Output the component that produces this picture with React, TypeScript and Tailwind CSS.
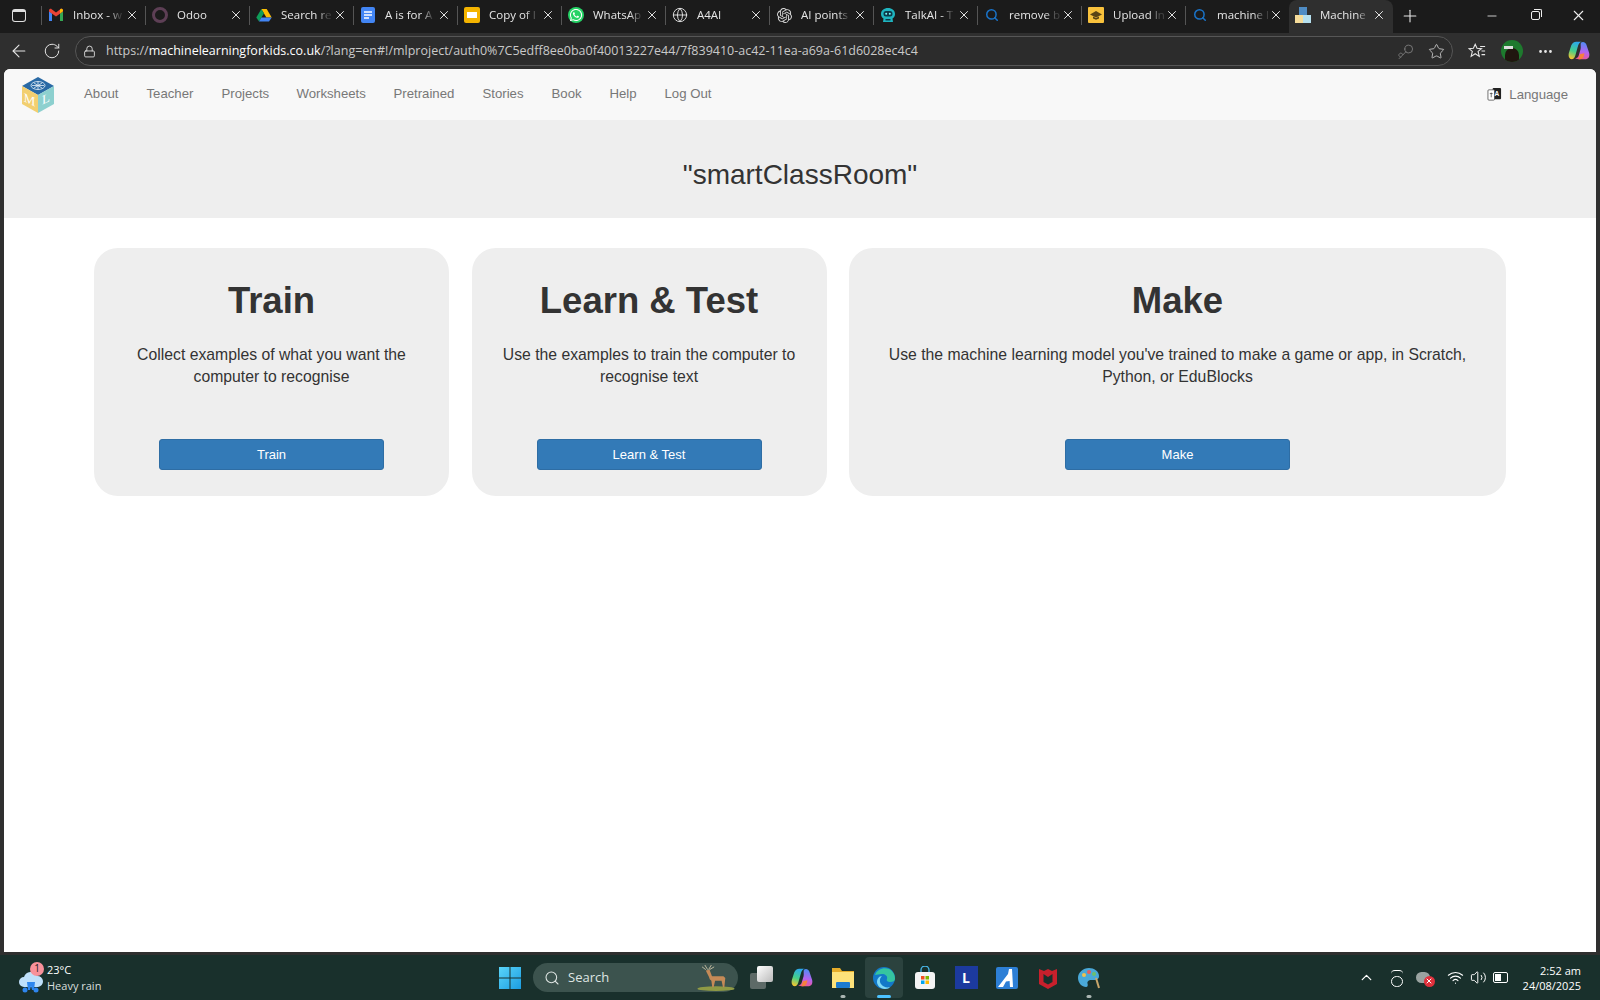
import type { ReactNode } from 'react';
import { ArrowLeft, ChevronUp, Globe, Key, Lock, Minus, MoreHorizontal, Plus, RotateCw, Search, Star, Volume2, Wifi, X } from 'lucide-react';
import { FaWhatsapp } from 'react-icons/fa';
import { SiOpenai } from 'react-icons/si';

const UI_FONT = "font-['Open_Sans','Noto_Sans',sans-serif]";

/* ---------- favicons ---------- */

function GmailIcon() {
  return (
    <svg viewBox="0 0 16 14" className="h-[14px] w-4">
      <path d="M1 13V3l3 2.4V13z" fill="#4285f4" />
      <path d="M12 13V5.4L15 3v10z" fill="#34a853" />
      <path d="M1 3.4 8 8.6l7-5.2V2.6C15 1 13.4.4 12.3 1.2L8 4.4 3.7 1.2C2.6.4 1 1 1 2.6z" fill="#ea4335" />
      <path d="M12 5.4 15 3v-.4C15 1 13.4.4 12.3 1.2L12 1.4z" fill="#fbbc04" />
    </svg>
  );
}

function DriveIcon() {
  return (
    <svg viewBox="0 0 16 14" className="h-[14px] w-4">
      <path d="M5.3 1h5.4l5 8.4h-5.3z" fill="#fbbc04" />
      <path d="M5.3 1 .3 9.4 3 13.6l5-8.4z" fill="#0f9d58" />
      <path d="M5.4 9.4h10.3L13 13.6H3z" fill="#4285f4" />
    </svg>
  );
}

function DocsIcon() {
  return (
    <svg viewBox="0 0 16 16" className="h-4 w-4">
      <rect x="1" y="0" width="14" height="16" rx="2" fill="#4285f4" />
      <path d="M4 5h8M4 8h8M4 11h5" stroke="#fff" strokeWidth="1.4" />
    </svg>
  );
}

function SlidesIcon() {
  return (
    <svg viewBox="0 0 16 16" className="h-4 w-4">
      <rect x="0" y="0" width="16" height="16" rx="2" fill="#f4b400" />
      <rect x="3" y="5" width="10" height="6" fill="#fff" />
    </svg>
  );
}

function WhatsAppIcon() {
  return (
    <span className="flex h-4 w-4 items-center justify-center rounded-full bg-[#25d366] text-white">
      <FaWhatsapp size={14} />
    </span>
  );
}

function TalkIcon() {
  return (
    <svg viewBox="0 0 16 16" className="h-4 w-4">
      <path d="M8 1c4 0 7 2.500 7 6 0 2-1 3.500-2.500 4.500l.5 3.500H3l.5-3.500C2 10.500 1 9 1 7c0-3.500 3-6 7-6z" fill="#1fb5c0" />
      <rect x="3.500" y="4" width="9" height="5.500" rx="2.500" fill="#0d3a4a" />
      <circle cx="6.200" cy="6.800" r="1" fill="#7ff" />
      <circle cx="9.800" cy="6.800" r="1" fill="#7ff" />
      <path d="M5.500 12h5v1.500h-5z" fill="#0d3a4a" />
    </svg>
  );
}

function UploadIcon() {
  return (
    <svg viewBox="0 0 16 16" className="h-4 w-4">
      <rect width="16" height="16" rx="1" fill="#f9c23c" />
      <path d="M8 4 14 7.500 8 10.500 2 7.500z" fill="#5b4415" />
      <path d="M5 9.500v2l3 1.200 3-1.200v-2l-3 1.500z" fill="#5b4415" />
    </svg>
  );
}

/* three toy blocks, the small favicon of the site */
function BlocksIcon() {
  return (
    <svg viewBox="0 0 16 16" className="h-4 w-4">
      <rect x="4" y="0" width="8" height="8" fill="#4f8cc4" />
      <rect x="0" y="8" width="8" height="8" fill="#f6dc9a" />
      <rect x="8" y="8" width="8" height="8" fill="#b6e0ef" />
    </svg>
  );
}

function MlLogo() {
  return (
    <svg viewBox="0 0 32 36" className="h-9 w-8 shrink-0">
      <path d="M16 0 32 9 16 18 0 9z" fill="#2a6aa5" />
      <path d="M0 9 16 18V36L0 27z" fill="#f2cf70" />
      <path d="M32 9 16 18V36L32 27z" fill="#8dd0cf" />
      <g fill="none" stroke="#e6f0f8" strokeWidth="0.8">
        <ellipse cx="16" cy="8.500" rx="7" ry="4" />
        <path d="M16 4.500v8M10 8.500h12M12 6l8 5M20 6l-8 5" />
      </g>
      <text x="7.500" y="27" textAnchor="middle" fontFamily="'Liberation Serif', serif" fontSize="13" fill="#fff" transform="skewY(25) translate(0 -3.500)">M</text>
      <text x="24" y="26" textAnchor="middle" fontFamily="'Liberation Serif', serif" fontSize="13" fill="#fff" transform="skewY(-25) translate(0 11)">L</text>
    </svg>
  );
}

function CopilotIcon({ id, className }: { id: string; className: string }) {
  return (
    <svg viewBox="0 0 24 24" className={className}>
      <defs>
        <linearGradient id={`${id}L`} x1="0.6" y1="0" x2="0.3" y2="1">
          <stop offset="0" stopColor="#2aa7f0" />
          <stop offset="0.55" stopColor="#45d08a" />
          <stop offset="1" stopColor="#f7c62f" />
        </linearGradient>
        <linearGradient id={`${id}R`} x1="0.6" y1="0" x2="0.4" y2="1">
          <stop offset="0" stopColor="#4d8df5" />
          <stop offset="0.55" stopColor="#b463ee" />
          <stop offset="1" stopColor="#f0568f" />
        </linearGradient>
      </defs>
      <path d="M9 2h6c-2.500.5-3.500 2.500-4.500 6l-2.500 9c-.7 2.500-2 4-4 4-2.500 0-4-3-3-7l2.500-8C4.500 3.500 6.500 2 9 2z" fill={`url(#${id}L)`} />
      <path d="M14 3c2.500-1.500 5-.5 6 2l3 9c1 3.500-.5 7-3.500 7H12c-2.500 0-4-1-4-1 2 0 3-1 3.700-3l2-7c.5-2-.2-4.500.3-7z" fill={`url(#${id}R)`} />
      <path d="M13 21c2 0 3.500-1 4.200-3.500l.8-3-5 1-1.500 5.500z" fill="#f7803c" />
    </svg>
  );
}

/* ---------- browser chrome ---------- */

const searchIcon = <Search size={14} strokeWidth={2.6} className="text-[#1a73c8]" />;

const tabs: { title: string; icon: ReactNode; active?: boolean }[] = [
  { title: 'Inbox - w', icon: <GmailIcon /> },
  { title: 'Odoo', icon: <span className="h-4 w-4 rounded-full border-[3px] border-[#5d3f55]" /> },
  { title: 'Search re', icon: <DriveIcon /> },
  { title: 'A is for A', icon: <DocsIcon /> },
  { title: 'Copy of I', icon: <SlidesIcon /> },
  { title: 'WhatsAp', icon: <WhatsAppIcon /> },
  { title: 'A4AI', icon: <Globe size={16} strokeWidth={1.4} className="text-[#e4e4e4]" /> },
  { title: 'AI points', icon: <SiOpenai size={15} className="text-[#d8d8d8]" /> },
  { title: 'TalkAI - T', icon: <TalkIcon /> },
  { title: 'remove b', icon: searchIcon },
  { title: 'Upload In', icon: <UploadIcon /> },
  { title: 'machine l', icon: searchIcon },
  { title: 'Machine', icon: <BlocksIcon />, active: true },
];

function TabBar() {
  return (
    <div className={`flex h-[33px] shrink-0 items-center bg-[#1b1b1b] text-[11.500px] text-[#e6e6e6] ${UI_FONT}`}>
      <div className="mb-[2px] flex w-[41px] shrink-0 justify-center pr-1">
        <div className="h-[13px] w-[14px] rounded-[3px] border border-[#e0e0e0] border-t-[3px]" />
      </div>
      {tabs.map((tab) => (
        <div
          key={tab.title}
          className={
            tab.active
              ? 'flex h-full w-[104px] shrink-0 items-center rounded-t-lg bg-[#2f2f2f] pb-[3px] pl-[6px]'
              : 'mb-[3px] flex h-[19px] w-[104px] shrink-0 items-center border-l border-[#555] pl-[6px]'
          }
        >
          <span className="flex w-4 shrink-0 items-center justify-center">{tab.icon}</span>
          <span className="ml-[9px] w-[52px] shrink-0 whitespace-nowrap [mask-image:linear-gradient(to_right,black_70%,rgba(0,0,0,0.2)_90%)]">
            {tab.title}
          </span>
          <X size={14} strokeWidth={1.6} className="shrink-0 text-[#f0f0f0]" />
        </div>
      ))}
      <Plus size={20} strokeWidth={1.3} className="mb-[2px] ml-[7px] text-[#e8e8e8]" />
      <div className="mb-[2px] ml-auto flex items-center text-[#eee]">
        <span className="flex w-[44px] justify-center"><Minus size={14} strokeWidth={1.4} /></span>
        <span className="flex w-[42px] justify-center">
          <span className="relative h-[9px] w-[9px] rounded-[2px] border border-[#eee] bg-[#1b1b1b] after:absolute after:-right-[3px] after:-top-[3px] after:h-[8px] after:w-[8px] after:rounded-tr-[2px] after:border-r after:border-t after:border-[#eee]" />
        </span>
        <span className="flex w-[44px] justify-center"><X size={17} strokeWidth={1.5} /></span>
      </div>
    </div>
  );
}

function AddressBar() {
  return (
    <div className={`flex h-[36px] shrink-0 items-center bg-[#2f2f2f] text-[#e6e6e6] ${UI_FONT}`}>
      <div className="flex w-[75px] shrink-0 items-center pl-[9px]">
        <ArrowLeft size={20} strokeWidth={1.3} />
        <RotateCw size={18} strokeWidth={1.3} className="ml-[14px]" />
      </div>
      <div className="flex h-[30px] w-[1378px] shrink-0 items-center rounded-full border border-[#565656] bg-[#2c2c2c] pl-[7px] pr-[7px]">
        <Lock size={13} strokeWidth={1.6} />
        <span className="ml-[10px] whitespace-nowrap text-[12.500px] text-[#c9c9c9]">
          https://<span className="text-white">machinelearningforkids.co.uk</span>/?lang=en#!/mlproject/auth0%7C5edff8ee0ba0f40013227e44/7f839410-ac42-11ea-a69a-61d6028ec4c4
        </span>
        <Key size={17} strokeWidth={1.1} className="ml-auto rotate-180 text-[#8a8a8a]" />
        <Star size={17} strokeWidth={1.2} className="ml-[14px] text-[#cfcfcf]" />
      </div>
      <svg viewBox="0 0 20 20" fill="none" stroke="#e6e6e6" strokeWidth="1.200" className="ml-[15px] h-[18px] w-[18px]">
        <path d="M8 2.500 10 7l5 .4-3.800 3.100L12.500 16 8 13l-4.500 3 1.300-5.500L1 7.400 6 7z" />
        <path d="M13.500 5H19M15 10h4M15 14h4" />
      </svg>
      <span className="relative ml-[15px] flex h-[22px] w-[22px] items-center justify-center overflow-hidden rounded-full bg-[#1e7a2e]">
        <span className="mt-[8px] h-[14px] w-[14px] rounded-t-full bg-[#20160f]" />
        <span className="absolute left-[3px] top-[6px] h-[3px] w-[9px] bg-[#ddd]" />
      </span>
      <MoreHorizontal size={17} className="ml-[14px]" />
      <CopilotIcon id="cpTop" className="ml-[14px] h-[22px] w-[22px]" />
    </div>
  );
}

/* ---------- page ---------- */

const navLinks = [
  ['About', 'w-[62.500px]'],
  ['Teacher', 'w-[75px]'],
  ['Projects', 'w-[75px]'],
  ['Worksheets', 'w-[97px]'],
  ['Pretrained', 'w-[89px]'],
  ['Stories', 'w-[69px]'],
  ['Book', 'w-[58px]'],
  ['Help', 'w-[55px]'],
  ['Log Out', 'w-[60px]'],
];

function Navbar() {
  return (
    <div className="flex h-[51px] shrink-0 items-center rounded-t-[6px] bg-[#f8f8f8] pl-[18px] pr-[28px] text-[13.200px] text-[#777]">
      <MlLogo />
      <nav className="ml-[30px] flex items-center pb-[1px]">
        {navLinks.map(([label, width]) => (
          <a key={label} className={`${width} shrink-0 whitespace-nowrap`}>{label}</a>
        ))}
      </nav>
      <div className="ml-auto flex items-center pt-[1px]">
        <svg viewBox="0 0 16 16" className="h-[15px] w-[15px]">
          <rect x="6" y="1" width="9" height="12" rx="1" fill="#222" />
          <rect x="1" y="3" width="7" height="11" rx="1" fill="#fff" stroke="#444" strokeWidth="0.800" />
          <path d="M3 7h3M4.500 6v5" stroke="#444" strokeWidth="0.800" />
          <text x="10.500" y="10" textAnchor="middle" fontSize="7" fontWeight="700" fill="#fff" fontFamily="'Liberation Sans', sans-serif">A</text>
        </svg>
        <span className="ml-[7px]">Language</span>
      </div>
    </div>
  );
}

function Card({ title, text, button, className }: { title: string; text: ReactNode; button: string; className: string }) {
  return (
    <div className={`flex h-[248px] shrink-0 flex-col items-center rounded-[24px] bg-[#eee] text-center text-[#333] ${className}`}>
      <h1 className="mt-[28px] text-[36.500px] font-bold leading-[50px]">{title}</h1>
      <p className="mt-[18px] text-[15.750px] leading-[22px] text-[#333]">{text}</p>
      <button className="mt-auto mb-[26px] h-[31px] w-[225px] rounded-[3px] border border-[#2e6da4] bg-[#337ab7] text-[13px] text-white">
        {button}
      </button>
    </div>
  );
}

function Page() {
  return (
    <div className="flex min-h-0 flex-1 flex-col rounded-t-[6px] bg-white font-['Liberation_Sans',Arial,sans-serif]">
      <Navbar />
      <div className="flex h-[98px] shrink-0 items-center justify-center bg-[#eee] pt-[11px] text-[28px] text-[#333]">
        "smartClassRoom"
      </div>
      <div className="mt-[30px] flex gap-[22.500px] pl-[90px]">
        <Card title="Train" text={<>Collect examples of what you want the<br />computer to recognise</>} button="Train" className="w-[355px]" />
        <Card title="Learn &amp; Test" text={<>Use the examples to train the computer to<br />recognise text</>} button="Learn &amp; Test" className="w-[355px]" />
        <Card title="Make" text={<>Use the machine learning model you've trained to make a game or app, in Scratch,<br />Python, or EduBlocks</>} button="Make" className="w-[657px]" />
      </div>
    </div>
  );
}

/* ---------- taskbar ---------- */

function StartIcon() {
  return (
    <svg viewBox="0 0 24 24" className="h-6 w-6">
      <defs>
        <linearGradient id="win" x1="0" y1="0" x2="1" y2="1"><stop offset="0" stopColor="#5ad4f8" /><stop offset="1" stopColor="#1b9de2" /></linearGradient>
      </defs>
      <path d="M1 1h10.500v10.500H1zM12.500 1H23v10.500H12.500zM1 12.500h10.500V23H1zM12.500 12.500H23V23H12.500z" fill="url(#win)" />
    </svg>
  );
}

function Deer() {
  return (
    <svg viewBox="0 0 40 28" className="absolute right-[3px] top-[2px] h-[26px] w-[38px]">
      <ellipse cx="20" cy="25.500" rx="20" ry="2.500" fill="#8f9a45" />
      <path d="M13 12h15l2 2-1 10h-1.500l-1.500-7h-7l-1.500 7H16l-1-7-2-2z" fill="#c58a57" />
      <path d="M9 6l4-1 3 8-3 1z" fill="#c58a57" />
      <path d="M8 0l3 5M15 0l-3 5M5 2l4 3M18 2l-5 3" stroke="#e8d8b8" strokeWidth="0.800" />
    </svg>
  );
}

const Slot = ({ children, active, dot }: { children: ReactNode; active?: boolean; dot?: string }) => (
  <div className={`relative flex h-[41px] w-[38px] shrink-0 items-center justify-center rounded-[4px] ${active ? 'bg-[#2b423e]' : ''}`}>
    {children}
    {dot && <span className={`absolute bottom-0 left-1/2 h-[3px] -translate-x-1/2 rounded-full ${dot}`} />}
  </div>
);

function Taskbar() {
  return (
    <div className={`flex h-[45px] shrink-0 items-center bg-[#19302c] text-white ${UI_FONT}`}>
      <div className="flex min-w-0 flex-1 items-center pl-[18px]">
        <div className="relative h-[26px] w-[26px]">
          <svg viewBox="0 0 26 26" className="mt-[3px] h-[26px] w-[26px]">
            <path d="M6 19a5 5 0 0 1 0-10 7 7 0 0 1 13-1 5.500 5.500 0 0 1 1 11z" fill="#bfe0fb" />
            <path d="M9 14h8l-1 8h-2l-1-4-1 4H10z" fill="#2e86ee" />
            <circle cx="7" cy="22" r="2.500" fill="#2e86ee" />
            <circle cx="18" cy="22" r="2.500" fill="#2e86ee" />
          </svg>
          <span className="absolute right-0 -top-[3px] flex h-[14px] w-[14px] items-center justify-center rounded-full bg-[#f8919b] text-[10px] text-[#222]">1</span>
        </div>
        <div className="ml-[3px] text-[11px] leading-[16px]">
          <div>23°C</div>
          <div className="text-[#d8dedc]">Heavy rain</div>
        </div>
      </div>
      <div className="flex shrink-0 items-center gap-[3px]">
        <Slot><StartIcon /></Slot>
        <div className="relative mx-[1px] flex h-[29px] w-[205px] items-center rounded-full bg-[#3c534e] pl-[11px] text-[13px] text-[#dfe5e3]">
          <Search size={16} strokeWidth={1.6} />
          <span className="ml-[8px]">Search</span>
          <Deer />
        </div>
        <Slot>
          <span className="relative h-[23px] w-[23px]">
            <span className="absolute bottom-0 left-0 h-[16px] w-[16px] rounded-[2px] bg-[#5d6a67]" />
            <span className="absolute right-0 top-0 h-[16px] w-[16px] rounded-[2px] bg-gradient-to-br from-white to-[#bbb]" />
          </span>
        </Slot>
        <Slot><CopilotIcon id="cpBar" className="h-[22px] w-[22px]" /></Slot>
        <Slot dot="w-[5px] bg-[#aab5b2]">
          <svg viewBox="0 0 24 24" className="h-[24px] w-[24px]">
            <path d="M1 2h8l2 3h12v17H1z" fill="#e6ad2a" />
            <path d="M1 6h22v16H1z" fill="#fde27a" />
            <rect x="5" y="16" width="14" height="6" rx="1" fill="#1c7bd0" />
          </svg>
        </Slot>
        <Slot active dot="w-[14px] bg-[#4cc2ff]">
          <svg viewBox="0 0 24 24" className="h-[24px] w-[24px]">
            <circle cx="12" cy="12" r="11" fill="#1378c8" />
            <path d="M3 9c2-6 9-8 14-6 4 2 6 6 6 10 0 2-2 3-5 3-2 0-4-1-3-3 1-3-2-5-5-5-3 0-5 1-7 1z" fill="#35c4a0" />
            <path d="M9 18c-2-3-1-6 1-8-3 0-5 3-5 6 0 3 3 7 8 7 3 0 4-1 5-2-3 1-7 0-9-3z" fill="#7fd8f5" />
          </svg>
        </Slot>
        <Slot>
          <svg viewBox="0 0 24 24" className="h-[24px] w-[24px]">
            <path d="M8 6V4a4 4 0 0 1 8 0v2" fill="none" stroke="#49b6e8" strokeWidth="1.300" />
            <rect x="2" y="6" width="20" height="17" rx="3" fill="#f4f4f4" />
            <path d="M8 10h3.500v3.500H8z" fill="#f25022" />
            <path d="M12.500 10H16v3.500h-3.500z" fill="#7fba00" />
            <path d="M8 14.500h3.500V18H8z" fill="#00a4ef" />
            <path d="M12.500 14.500H16V18h-3.500z" fill="#ffb900" />
          </svg>
        </Slot>
        <Slot>
          <span className="flex h-[23px] w-[23px] items-center justify-center bg-[#1c3a9e] text-[14px] font-bold text-white">L</span>
        </Slot>
        <Slot>
          <svg viewBox="0 0 24 24" className="h-[24px] w-[24px]">
            <rect x="1" y="1" width="22" height="22" rx="2" fill="#2d7fd6" />
            <path d="M3 21 13 8l1-5h3l1 18h-3l-.4-6-3.600.5L8 21z" fill="#fff" />
          </svg>
        </Slot>
        <Slot>
          <svg viewBox="0 0 24 24" className="h-[24px] w-[24px]">
            <path d="M3 3l5 2 4-2 4 2 5-2v15l-9 5-9-5zM7.500 8v8l4.500 2.500 4.500-2.500V8L12 11z" fill="#c8202c" fillRule="evenodd" />
          </svg>
        </Slot>
        <Slot dot="w-[5px] bg-[#aab5b2]">
          <svg viewBox="0 0 24 24" className="h-[24px] w-[24px]">
            <path d="M12 2C6 2 1 6.500 1 12c0 5 4 9 8 9 2 0 2-2 1.500-3.500C10 15.500 12 14 14 14h3c3 0 5-1 5-4 0-5-5-8-10-8z" fill="#4aa8d8" />
            <circle cx="7" cy="9" r="2" fill="#f2c14e" />
            <circle cx="12" cy="6" r="2" fill="#e85d5d" />
            <circle cx="17" cy="8" r="2" fill="#6cc06c" />
            <path d="M19 12l3 10" stroke="#c9a56a" strokeWidth="2" />
          </svg>
        </Slot>
      </div>
      <div className="flex min-w-0 flex-1 items-center justify-end pr-[19px]">
        <ChevronUp size={17} strokeWidth={1.8} className="mr-[16px]" />
        <span className="relative mr-[13px] h-[18px] w-[12px]">
          <span className="absolute bottom-0 left-0 h-[11px] w-[12px] rounded-full border-[1.500px] border-white" />
          <span className="absolute left-0 top-[1px] h-[8px] w-[12px] rounded-full border-t-[1.500px] border-white" />
        </span>
        <span className="relative mr-[13px] h-[14px] w-[18px]">
          <span className="absolute left-0 top-[1px] h-[11px] w-[14px] rounded-full bg-[#9aa3a1]" />
          <span className="absolute -bottom-[2px] -right-[1px] flex h-[11px] w-[11px] items-center justify-center rounded-full bg-[#e0303c]">
            <X size={8} strokeWidth={3} />
          </span>
        </span>
        <Wifi size={17} strokeWidth={1.6} />
        <Volume2 size={17} strokeWidth={1.4} className="ml-[6px]" />
        <span className="ml-[6px] flex h-[11px] w-[15px] items-center rounded-[2px] border border-white p-[1px]">
          <span className="h-full w-[6px] bg-white" />
        </span>
        <div className="ml-[15px] text-right text-[11px] leading-[15px]">
          <div>2:52 am</div>
          <div>24/08/2025</div>
        </div>
      </div>
    </div>
  );
}

export default function App() {
  return (
    <div className="flex h-screen w-full flex-col overflow-hidden bg-[#2f2f2f]">
      <TabBar />
      <AddressBar />
      <div className="flex min-h-0 flex-1 flex-col px-[4px] pb-[3px]">
        <Page />
      </div>
      <Taskbar />
    </div>
  );
}
